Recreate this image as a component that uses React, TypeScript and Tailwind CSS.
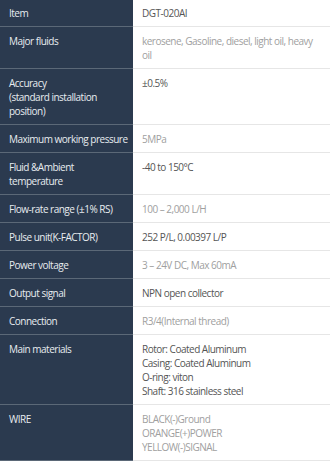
import React from 'react';

interface SpecRow {
  label: string[];
  value: string[];
  muted?: boolean;
}

const rows: SpecRow[] = [
  { label: ['Item'], value: ['DGT-020AI'] },
  { label: ['Major fluids'], value: ['kerosene, Gasoline, diesel, light oil, heavy', 'oil'], muted: true },
  { label: ['Accuracy', '(standard installation', 'position)'], value: ['±0.5%'] },
  { label: ['Maximum working pressure'], value: ['5MPa'], muted: true },
  { label: ['Fluid &Ambient', 'temperature'], value: ['-40 to 150°C'] },
  { label: ['Flow-rate range (±1% RS)'], value: ['100 – 2,000 L/H'], muted: true },
  { label: ['Pulse unit(K-FACTOR)'], value: ['252 P/L, 0.00397 L/P'] },
  { label: ['Power voltage'], value: ['3 – 24V DC, Max 60mA'], muted: true },
  { label: ['Output signal'], value: ['NPN open collector'] },
  { label: ['Connection'], value: ['R3/4(Internal thread)'], muted: true },
  {
    label: ['Main materials'],
    value: ['Rotor: Coated Aluminum', 'Casing: Coated Aluminum', 'O-ring: viton', 'Shaft: 316 stainless steel'],
  },
  { label: ['WIRE'], value: ['BLACK(-)Ground', 'ORANGE(+)POWER', 'YELLOW(-)SIGNAL'], muted: true },
];

export default function App() {
  return (
    <div className="w-[330px] h-[463px] overflow-hidden bg-white font-['Open_Sans',sans-serif] text-[10px] leading-[14px] tracking-[-0.5px]">
      {rows.map((row, i) => (
        <div key={i} className="flex">
          {/* label cell */}
          <div
            className={`w-[133px] shrink-0 bg-[#2b3a4f] text-[#e8ecf0] pl-[9px] pb-[6px] border-b border-[#5b6877] whitespace-nowrap ${
              i === 0 ? 'pt-[6px]' : 'pt-[7px]'
            }`}
          >
            {row.label.map((l, j) => (
              <div key={j}>{l}</div>
            ))}
          </div>
          {/* value cell */}
          <div
            className={`flex-1 pl-[9px] pb-[6px] border-b border-[#e6e6e6] whitespace-nowrap ${
              i === 0 ? 'pt-[6px]' : 'pt-[7px]'
            } ${row.muted ? 'text-[#a0a0a0]' : 'text-[#555555]'}`}
          >
            {row.value.map((v, j) => (
              <div key={j}>{v}</div>
            ))}
          </div>
        </div>
      ))}
    </div>
  );
}
